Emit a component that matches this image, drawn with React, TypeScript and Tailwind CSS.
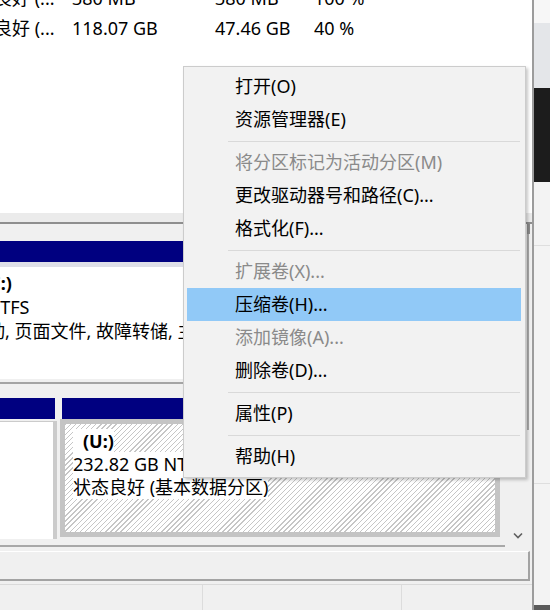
type MenuEntry = { label: string; disabled?: boolean; active?: boolean } | "sep";

const menuEntries: MenuEntry[] = [
  { label: "打开(O)" },
  { label: "资源管理器(E)" },
  "sep",
  { label: "将分区标记为活动分区(M)", disabled: true },
  { label: "更改驱动器号和路径(C)..." },
  { label: "格式化(F)..." },
  "sep",
  { label: "扩展卷(X)...", disabled: true },
  { label: "压缩卷(H)...", active: true },
  { label: "添加镜像(A)...", disabled: true },
  { label: "删除卷(D)..." },
  "sep",
  { label: "属性(P)" },
  "sep",
  { label: "帮助(H)" },
];

const volumes = [
  ["状态良好 (...", "380 MB", "380 MB", "100 %"],
  ["状态良好 (...", "118.07 GB", "47.46 GB", "40 %"],
];

function VolumeList() {
  return (
    <div className="h-[213px] overflow-hidden bg-white">
      <div className="-mt-[17px]">
        {volumes.map((row, i) => (
          <div key={i} className="flex h-[30px] items-center whitespace-nowrap">
            <div className="w-[72px]">
              <span className="-ml-[42px] block">{row[0]}</span>
            </div>
            <div className="w-[143px]">{row[1]}</div>
            <div className="w-[99px]">{row[2]}</div>
            <div>{row[3]}</div>
          </div>
        ))}
      </div>
    </div>
  );
}

function ContextMenu() {
  return (
    <div className="absolute left-[183px] top-[66px] w-[343px] border border-[#cccccc] bg-[#f2f2f2] pb-[4px] pt-[3px] shadow-[2px_2px_3px_rgba(0,0,0,0.22)]">
      {menuEntries.map((entry, i) =>
        entry === "sep" ? (
          <div key={i} className="ml-[44px] mr-[5px] flex h-[10px] items-center">
            <div className="h-px w-full bg-[#d9d9d9]" />
          </div>
        ) : (
          <div
            key={i}
            className={
              "ml-[3px] mr-[4px] flex h-[33px] items-center whitespace-nowrap pl-[48px] " +
              (entry.active ? "bg-[#91c9f7] " : "") +
              (entry.disabled ? "text-[#8a8a8a]" : "text-black")
            }
          >
            {entry.label}
          </div>
        )
      )}
    </div>
  );
}

function DiskPane() {
  return (
    <div className="flex h-[321px]">
      <div className="flex w-[505px] flex-col overflow-hidden">
        <div className="h-[17px]" />
        <div className="h-[21px] w-[500px] bg-[#000080]" />
        <div className="h-[5px] w-[500px] bg-[#dedfe8]" />
        <div className="h-[112px] w-[500px] overflow-hidden whitespace-nowrap bg-white pt-[4px] leading-[24px]">
          <div className="-ml-[17px] font-bold">(C:)</div>
          <div className="-ml-[104px]">118.07 GB NTFS</div>
          <div className="-ml-[113px]">状态良好 (启动, 页面文件, 故障转储, 主分区)</div>
        </div>
        <div className="h-[3px]" />
        <div className="h-[2px] bg-[#a4a4a4]" />
        <div className="h-[14px]" />
        <div className="flex h-[141px]">
          <div className="flex w-[57px] flex-col">
            <div className="h-[21px] w-[55px] bg-[#000080]" />
            <div className="mt-[2px] h-[118px] border-r-4 border-t border-[#cbcbcb] bg-white" />
          </div>
          <div className="w-[3px]" />
          <div className="flex w-[440px] flex-col">
            <div className="ml-[2px] h-[21px] bg-[#000080]" />
            <div className="h-[118px] border-[5px] border-[#c4c4c4]">
              <div className="h-full whitespace-nowrap bg-[image:repeating-linear-gradient(135deg,#c6c6c6_0px,#c6c6c6_1px,#ffffff_1px,#ffffff_3.6px)] pl-[8px] pt-[6px] leading-[23px]">
                <div>
                  <span className="bg-white pl-[10px] font-bold">(U:)</span>
                </div>
                <div>
                  <span className="bg-white">232.82 GB NTFS</span>
                </div>
                <div>
                  <span className="bg-white">状态良好 (基本数据分区)</span>
                </div>
              </div>
            </div>
          </div>
        </div>
      </div>
      <div className="flex w-[27px] flex-col justify-between pb-[6px]">
        <div className="ml-[22px] flex h-[206px] w-[3px] flex-col">
          <div className="h-[10px] w-[3px] bg-[#8a8a8a]" />
          <div className="w-[2px] flex-1 bg-[#ababab]" />
        </div>
        <svg className="ml-[8px]" width="10" height="7" viewBox="0 0 10 7">
          <polyline points="1,1.5 5,5.5 9,1.5" fill="none" stroke="#5f5f5f" strokeWidth="1.6" />
        </svg>
      </div>
    </div>
  );
}

export default function App() {
  return (
    <div className="relative flex h-[610px] w-[550px] overflow-hidden bg-white font-['Noto_Sans','Noto_Sans_CJK_SC',sans-serif] text-[18px] text-black">
      <div className="flex w-[534px] flex-col border-r-2 border-[#9c9c9c] bg-[#f0f0f0]">
        <VolumeList />
        <div className="h-[9px] bg-[#ebebeb]" />
        <div className="h-[2px] bg-[#8e8e8e]" />
        <DiskPane />
        <div className="h-[2px] w-[505px] bg-[#a8a8a8]" />
        <div className="h-[4px]" />
        <div className="mr-[2px] h-[30px] border-b-2 border-r-2 border-t border-b-[#a3a3a3] border-r-[#a3a3a3] border-t-white" />
        <div className="h-[3px]" />
        <div className="h-px bg-[#dadada]" />
        <div className="flex flex-1">
          <div className="w-[203px] border-r border-[#dcdcdc]" />
          <div className="w-[199px] border-r border-[#dcdcdc]" />
        </div>
      </div>
      <div className="flex flex-1 flex-col bg-[#f3f3f3]">
        <div className="h-[23px] bg-[#f7f7f7]" />
        <div className="h-[65px] bg-[#e4e6e9]" />
        <div className="h-[94px] bg-[#1c1c1c]" />
        <div className="h-[63px]" />
        <div className="h-px bg-[#dedede]" />
        <div className="h-[237px]" />
        <div className="h-px bg-[#dedede]" />
        <div className="flex-1" />
        <div className="h-[5px] bg-[#5a5a5a]" />
      </div>
      <ContextMenu />
    </div>
  );
}
